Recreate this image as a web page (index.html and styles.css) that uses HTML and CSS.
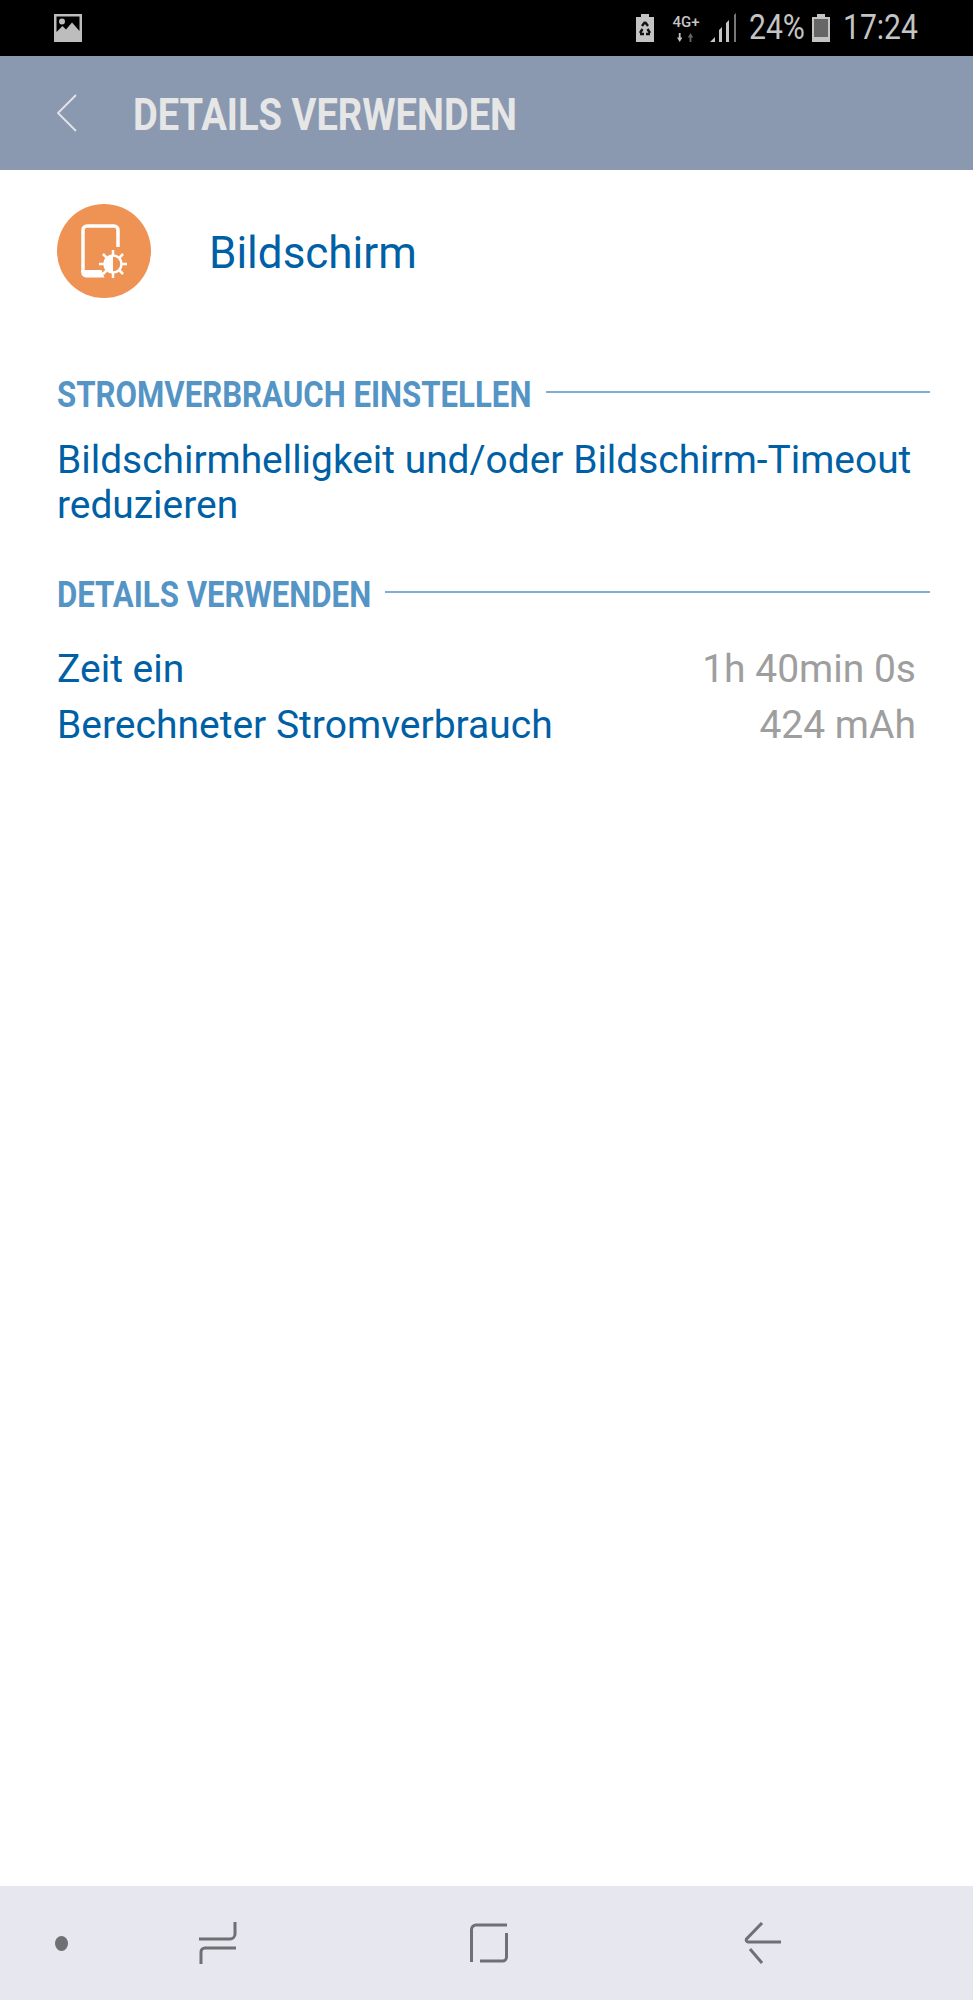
FILE: index.html
```html
<!DOCTYPE html>
<html lang="de">
<head>
<meta charset="utf-8">
<title>Details verwenden</title>
<link rel="stylesheet" href="styles.css">
</head>
<body>
<div class="screen">
  <div class="status">
    <svg class="ic-picture" viewBox="0 0 28 28"><path fill="#bdbdbd" fill-rule="evenodd" d="M0 0h28v28H0zM2.500 2.500v15.500l6-6 3.500 3.500 6-7 7.500 8.500V2.500zM8 4.500a3 3 0 1 1 0 6 3 3 0 0 1 0-6z"/></svg>
    <div class="status-right">
      <svg class="ic-saver" viewBox="0 0 20 30"><path fill="#c4c4c4" d="M6 1h8v3h5v25H1V4h5z"/><path fill="none" stroke="#111" stroke-width="2.400" d="M10 9l3 4M10 9l-3 4M5 20l2.500-4M5 21h4M15 21h-4M15 20l-2.500-4"/></svg>
      <div class="net">
        <span class="net-label">4G+</span>
        <svg class="ic-arrows" viewBox="0 0 20 10"><path fill="#c4c4c4" d="M2 0h2v5h2L3 10 0 5h2z"/><path fill="#666" d="M14 10h2V5h2l-3-5-3 5h2z"/></svg>
      </div>
      <svg class="ic-signal" viewBox="0 0 28 30"><path fill="#c4c4c4" d="M1 29l5-5v5zM10 29V17l3-3v15zM17 29V10l3-3v22z"/><path fill="#777" d="M25 29V2l2-2v29z"/></svg>
      <span class="status-text pct">24%</span>
      <svg class="ic-battery" viewBox="0 0 20 30"><path fill="#c4c4c4" d="M6 1h8v3h5v25H1V4h5z"/><rect x="3" y="6" width="14" height="18" fill="#666"/></svg>
      <span class="status-text clock">17:24</span>
    </div>
  </div>

  <header class="appbar">
    <svg class="ic-back" viewBox="0 0 22 38"><path fill="none" stroke="#dfe2e6" stroke-width="2" d="M20 1L2 19l18 18" stroke-linejoin="round"/></svg>
    <h1 class="appbar-title"><span class="cond">DETAILS VERWENDEN</span></h1>
  </header>

  <main class="content">
    <div class="app-row">
      <div class="app-icon">
        <svg viewBox="0 0 94 94">
          <path fill="none" stroke="#fff" stroke-width="3.500" d="M61 43V26a4 4 0 0 0-4-4H30a4 4 0 0 0-4 4v42"/>
          <path fill="#fff" d="M24.200 66h20.300l3 7.500H29a4.800 4.800 0 0 1-4.800-4.800z"/>
          <circle cx="56" cy="60" r="8.500" fill="none" stroke="#fff" stroke-width="2.500"/>
          <path fill="#fff" d="M56 51.500a8.500 8.500 0 0 0 0 17z"/>
          <path stroke="#fff" stroke-width="2.500" d="M56 46v5M56 69v5M42 60h5M65 60h5M46 50l3.500 3.500M66 50l-3.500 3.500M46 70l3.500-3.500M66 70l-3.500-3.500"/>
        </svg>
      </div>
      <div class="app-name">Bildschirm</div>
    </div>

    <section class="section first">
      <div class="section-head">
        <h2 class="section-title"><span class="cond">STROMVERBRAUCH EINSTELLEN</span></h2>
        <div class="rule"></div>
      </div>
      <p class="advice">Bildschirmhelligkeit und/oder Bildschirm-Timeout reduzieren</p>
    </section>

    <section class="section second">
      <div class="section-head">
        <h2 class="section-title"><span class="cond">DETAILS VERWENDEN</span></h2>
        <div class="rule"></div>
      </div>
      <div class="rows">
        <div class="row"><span>Zeit ein</span><span class="value">1h 40min 0s</span></div>
        <div class="row"><span>Berechneter Stromverbrauch</span><span class="value">424 mAh</span></div>
      </div>
    </section>
  </main>

  <nav class="navbar">
    <span class="nav-dot"></span>
    <svg class="nav-icon recents" viewBox="0 0 38 42"><path fill="none" stroke="#6f7073" stroke-width="3" d="M36 0v12a5 5 0 0 1-5 5H0M37 26H6a4 4 0 0 0-4 4v12"/></svg>
    <svg class="nav-icon home" viewBox="0 0 38 40"><path fill="none" stroke="#6f7073" stroke-width="3" d="M37 2H6a4.500 4.500 0 0 0-4.500 4.500V39M36.500 10v24a4 4 0 0 1-4 4H10"/></svg>
    <svg class="nav-icon backkey" viewBox="0 0 38 42"><path fill="none" stroke="#6f7073" stroke-width="3" d="M37 20H4a2 2 0 0 1-1.500-3L18 1M6 27l12 14"/></svg>
  </nav>
</div>
</body>
</html>
```
FILE: styles.css
```css
* { box-sizing: border-box; }
html, body { margin: 0; padding: 0; background: #fff; }
body { font-family: Roboto, "Liberation Sans", sans-serif; }
.screen { width: 973px; height: 2000px; display: flex; flex-direction: column; overflow: hidden; }

.status { height: 56px; background: #000; display: flex; align-items: center; justify-content: space-between; padding: 0 57px 0 54px; flex: none; }
.ic-picture { width: 28px; height: 28px; }
.status-right { display: flex; align-items: center; }
.ic-saver { width: 20px; height: 30px; }
.net { display: flex; flex-direction: column; align-items: center; margin-left: 17px; width: 28px; }
.net-label { font-size: 15px; line-height: 15px; color: #c4c4c4; font-weight: 500; white-space: nowrap; }
.ic-arrows { width: 20px; height: 9px; margin-top: 3px; }
.ic-signal { width: 28px; height: 30px; margin-left: 9px; }
.status-text { font-size: 35px; line-height: 40px; color: #c4c4c4; display: block; white-space: nowrap; transform-origin: left center; transform: scaleX(.86); }
.pct { width: 54px; margin-left: 12px; }
.ic-battery { width: 20px; height: 30px; margin-left: 8px; }
.clock { width: 73px; margin-left: 12px; }

.appbar { height: 114px; background: #8a99b0; display: flex; align-items: center; padding-left: 56px; flex: none; }
.ic-back { width: 22px; height: 38px; }
.appbar-title { margin: 0 0 0 55px; padding-top: 4px; font-size: 44px; font-weight: 700; color: #e6e6e6; line-height: 50px; white-space: nowrap; }
.cond { display: inline-block; transform-origin: left center; transform: scaleX(.866); }

.content { flex: 1; padding: 0 43px 0 57px; color: #0060a5; }
.app-row { display: flex; align-items: center; padding-top: 34px; }
.app-icon { width: 94px; height: 94px; border-radius: 50%; background: #ef9354; flex: none; }
.app-icon svg { width: 94px; height: 94px; display: block; }
.app-name { margin-left: 58px; padding-top: 4px; font-size: 44px; line-height: 50px; }

.section.first { margin-top: 77px; }
.section.second { margin-top: 48px; }
.section-head { display: flex; align-items: center; height: 34px; }
.section-title { margin: 0; padding-top: 5px; font-size: 36px; line-height: 34px; font-weight: 700; color: #5495c6; white-space: nowrap; flex: none; }
.rule { flex: 1; height: 2px; background: #7fadd3; }
.first .section-title { width: 489px; }
.second .section-title { width: 328px; }
.advice { margin: 28px 0 0; font-size: 38.9px; line-height: 45px; }
.rows { margin-top: 32px; padding-right: 14px; }
.row { display: flex; justify-content: space-between; font-size: 39px; line-height: 56px; }
.value { color: #9e9e9e; }

.navbar { height: 114px; background: #e6e7ef; flex: none; display: flex; align-items: center; padding-left: 55px; }
.nav-dot { width: 13px; height: 15px; border-radius: 50%; background: #6f7073; }
.nav-icon { width: 38px; height: 42px; flex: none; }
.recents { margin-left: 131px; }
.home { margin-left: 233px; height: 40px; }
.backkey { margin-left: 236px; }
```
